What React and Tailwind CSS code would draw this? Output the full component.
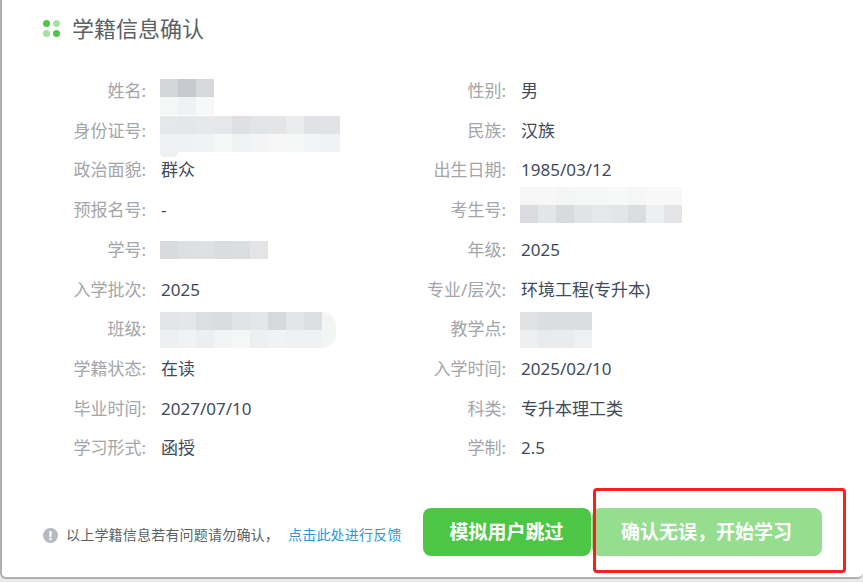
import React from 'react';

const Mosaic = ({ left, top, cols, cells }) => (
  <div
    className="absolute grid"
    style={{ left, top, gridTemplateColumns: `repeat(${cols}, 18px)`, gridAutoRows: '18px' }}
  >
    {cells.map((c, i) => (
      <div key={i} style={{ backgroundColor: c }} />
    ))}
  </div>
);

const leftRows = [
  { label: '姓名:', mosaic: { left: -1, top: -12, cols: 3, cells: ['#d3d5d9', '#c6c9ce', '#d6d8dc', '#f5f6f6', '#f0f1f2', '#f7f8f8'] } },
  {
    label: '身份证号:',
    mosaic: { left: -1, top: -15, cols: 10, cells: ['#e6e7e9', '#e5e6e8', '#e7e8ea', '#e6e7e9', '#dfe0e3', '#e3e4e6', '#e4e5e7', '#ebecee', '#e1e2e5', '#e2e3e6', '#eff0f1', '#f0f1f2', '#f1f2f3', '#f6f7f7', '#f1f2f3', '#f3f4f5', '#f7f7f8', '#f5f6f6', '#f2f3f4', '#f1f2f3'] },
    smear: 'left-[-1px] top-[21px] h-[5px] w-[18px] rounded-b-md bg-[#eeeff1]',
  },
  { label: '政治面貌:', value: '群众' },
  { label: '预报名号:', value: '-' },
  { label: '学号:', mosaic: { left: -1, top: -9, cols: 6, cells: ['#d9dadd', '#dedfe2', '#dfe0e3', '#dbdcdf', '#dcdde0', '#e3e4e6'] } },
  { label: '入学批次:', value: '2025' },
  {
    label: '班级:',
    mosaic: { left: -1, top: -17, cols: 9, cells: ['#e3e4e6', '#e5e6e8', '#dcdee1', '#dadce0', '#e2e3e6', '#e5e6e8', '#d6d8dc', '#e3e4e6', '#dddee1', '#eeeff0', '#f1f2f3', '#eceef0', '#f2f3f4', '#f5f6f6', '#eeeff1', '#f1f2f3', '#eff0f2', '#f0f1f2'] },
    smear: 'left-[161px] top-[-17px] h-[36px] w-[14px] rounded-r-full bg-[#f3f4f4]',
  },
  { label: '学籍状态:', value: '在读' },
  { label: '毕业时间:', value: '2027/07/10' },
  { label: '学习形式:', value: '函授' },
];

const rightRows = [
  { label: '性别:', value: '男' },
  { label: '民族:', value: '汉族' },
  { label: '出生日期:', value: '1985/03/12' },
  { label: '考生号:', mosaic: { left: -1, top: -23, cols: 9, cells: ['#f6f7f7', '#f7f7f8', '#f4f5f5', '#f5f6f6', '#f6f7f7', '#f7f8f8', '#f5f6f6', '#f8f8f9', '#f7f8f8', '#dadbde', '#e4e5e7', '#d9dadd', '#e2e3e5', '#e6e7e9', '#e4e5e7', '#dcdde0', '#eeeff0', '#e3e4e6'] } },
  { label: '年级:', value: '2025' },
  { label: '专业/层次:', value: '环境工程(专升本)' },
  { label: '教学点:', mosaic: { left: -1, top: -17, cols: 4, cells: ['#e0e1e3', '#dcdddf', '#dcdddf', '#dcdddf', '#eeeff0', '#e9eaeb', '#eaebec', '#eff0f1'] } },
  { label: '入学时间:', value: '2025/02/10' },
  { label: '科类:', value: '专升本理工类' },
  { label: '学制:', value: '2.5' },
];

const InfoColumn = ({ rows, width, labelWidth }) => (
  <div className="flex flex-col" style={{ width }}>
    {rows.map((row) => (
      <div key={row.label} className="flex h-[39.7px] items-center text-[17px]">
        <span className="shrink-0 text-right text-[#a3a5a8]" style={{ width: labelWidth }}>{row.label}</span>
        <div className="relative ml-[15px] flex-1 text-[#3f4a5c]">
          {row.value}
          {row.mosaic && <Mosaic {...row.mosaic} />}
          {row.smear && <div className={`absolute ${row.smear}`} />}
        </div>
      </div>
    ))}
  </div>
);

const App = () => (
  <div
    className="h-[582px] w-[863px] overflow-hidden bg-[#e9e9e9]"
    style={{ fontFamily: '"Noto Sans", "Noto Sans CJK SC", sans-serif' }}
  >
    <div className="relative flex h-[579px] flex-col rounded-b-md border-b-2 border-l-2 border-[#b0b0b0] bg-white">
      <div className="flex h-[56px] items-center pl-[41px]">
        <div className="grid grid-cols-2 gap-[3px]">
          <span className="size-[7px] rounded-full bg-[#4dc646]" />
          <span className="size-[7px] rounded-full bg-[#a5e2a1]" />
          <span className="size-[7px] rounded-full bg-[#a5e2a1]" />
          <span className="size-[7px] rounded-full bg-[#4dc646]" />
        </div>
        <h1 className="ml-[12px] text-[22px] font-normal text-[#5c5f63]">学籍信息确认</h1>
      </div>

      <div className="mt-[15px] flex">
        <InfoColumn rows={leftRows} width={358} labelWidth={144} />
        <InfoColumn rows={rightRows} width={400} labelWidth={146} />
      </div>

      <div className="mt-[40px] flex items-center">
        <div className="flex items-center pt-[7px]">
          <svg className="ml-[41px] size-[15px]" viewBox="0 0 15 15">
            <circle cx="7.5" cy="7.5" r="7.5" fill="#b5b9c2" />
            <rect x="6.3" y="3" width="2.4" height="6" rx="1" fill="#fff" />
            <circle cx="7.5" cy="11" r="1.3" fill="#fff" />
          </svg>
          <span className="ml-[8px] whitespace-nowrap text-sm tracking-[0.2px] text-[#5c5f63]">以上学籍信息若有问题请勿确认，</span>
          <a className="ml-[9px] whitespace-nowrap text-sm tracking-[0.2px] text-[#2b96e0]">点击此处进行反馈</a>
        </div>
        <button className="ml-[21px] h-[48px] w-[168px] shrink-0 rounded-lg bg-[#4dc646] text-[19px] font-bold text-white">模拟用户跳过</button>
        <button className="ml-[1px] h-[48px] w-[230px] shrink-0 rounded-lg bg-[#95dd8f] text-[19px] font-bold text-white">确认无误，开始学习</button>
      </div>

      <div className="absolute left-[591px] top-[488px] h-[85px] w-[253px] rounded-[4px] border-[3px] border-[#f5211a]" />
    </div>
  </div>
);

export default App;
